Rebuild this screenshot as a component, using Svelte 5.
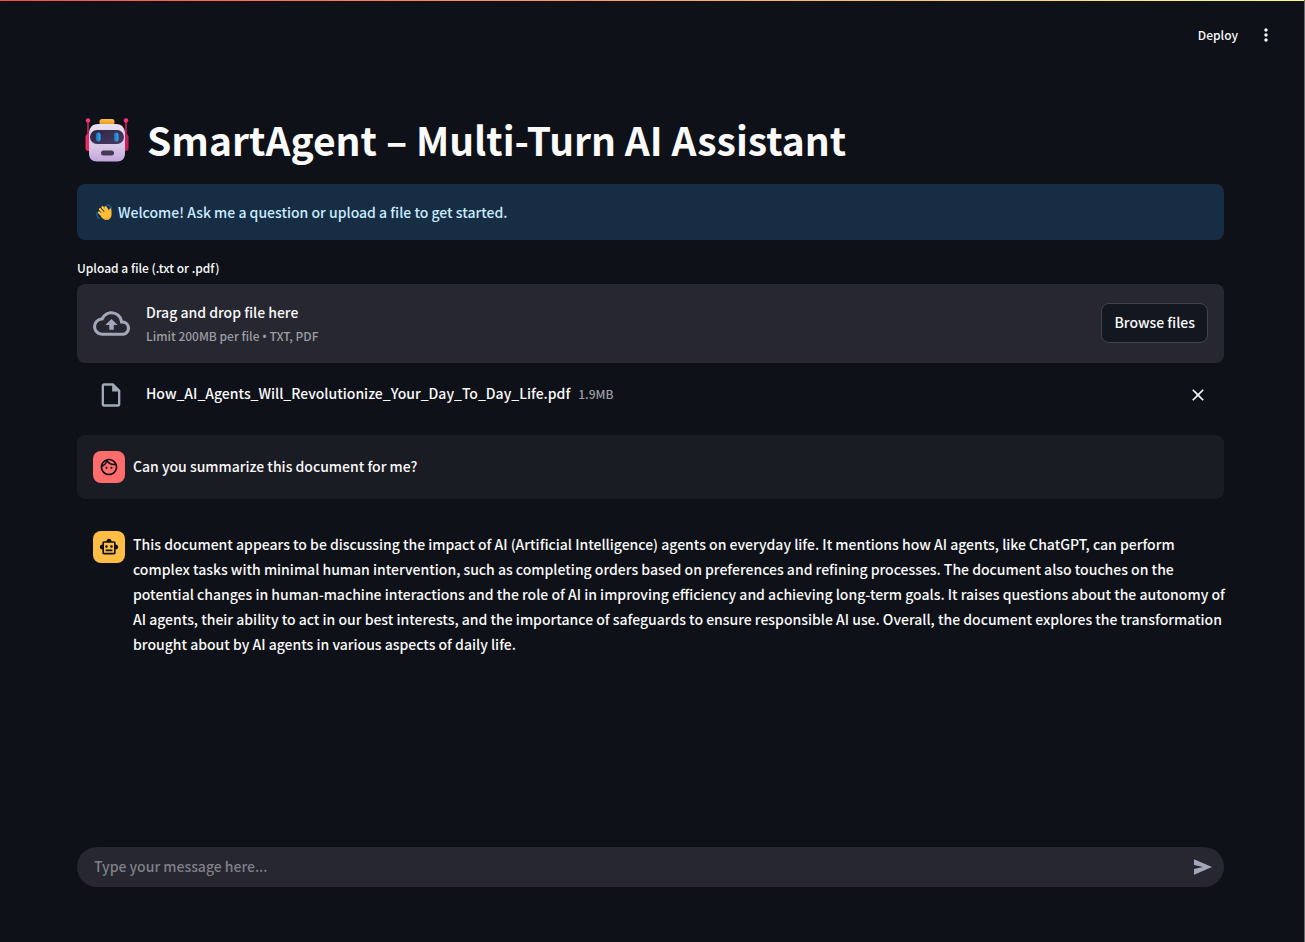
<script lang="ts">
  let message = $state('');
  let attached = $state(true);
</script>

<svelte:head><title>SmartAgent</title></svelte:head>

<div class="app">
  <div class="decoration"></div>
  <header>
    <button class="plain deploy" type="button">Deploy</button>
    <button class="plain" type="button" aria-label="Main menu">
      <svg width="20" height="20" viewBox="0 0 24 24" fill="currentColor"><path d="M12 8c1.1 0 2-.9 2-2s-.9-2-2-2-2 .9-2 2 .9 2 2 2zm0 2c-1.1 0-2 .9-2 2s.9 2 2 2 2-.9 2-2-.9-2-2-2zm0 6c-1.1 0-2 .9-2 2s.9 2 2 2 2-.9 2-2-.9-2-2-2z" /></svg>
    </button>
  </header>

  <main>
    <h1>
      <svg class="robot" width="46" height="46" viewBox="0 0 46 46" aria-hidden="true">
        <defs>
          <linearGradient id="head" x1="0" y1="0" x2="0" y2="1">
            <stop offset="0" stop-color="#e9e0f0" /><stop offset=".6" stop-color="#d8c8e6" /><stop offset="1" stop-color="#c3a5dc" />
          </linearGradient>
          <linearGradient id="visor" x1="0" y1="0" x2="1" y2="1">
            <stop offset="0" stop-color="#2d2540" /><stop offset="1" stop-color="#4b3b66" />
          </linearGradient>
          <linearGradient id="cap" x1="0" y1="0" x2="0" y2="1">
            <stop offset="0" stop-color="#ffc43c" /><stop offset="1" stop-color="#e58f2c" />
          </linearGradient>
          <linearGradient id="eye" x1="0" y1="0" x2="1" y2="0">
            <stop offset="0" stop-color="#1670b8" /><stop offset="1" stop-color="#35aef2" />
          </linearGradient>
        </defs>
        <path d="M4 5v21M42 5v21" stroke="#d81e5b" stroke-width="1.6" />
        <circle cx="4" cy="4.5" r="2.3" fill="#f4386c" /><circle cx="42" cy="4.5" r="2.3" fill="#f4386c" />
        <rect x="1.5" y="18" width="6" height="17" rx="3" fill="#ef2b62" />
        <rect x="38.5" y="18" width="6" height="17" rx="3" fill="#c81f58" />
        <rect x="15.5" y="3" width="15" height="6" rx="2.5" fill="url(#cap)" />
        <path d="M14 8h18c6 0 9 4 9 10v19.500c0 5-3 8-8 8H13c-5 0-8-3-8-8V18C5 12 8 8 14 8z" fill="url(#head)" />
        <rect x="6" y="14" width="34" height="14" rx="7" fill="url(#visor)" />
        <rect x="12" y="16.5" width="4.5" height="9" rx="2.2" fill="url(#eye)" />
        <rect x="30" y="16.5" width="4.5" height="9" rx="2.2" fill="url(#eye)" />
        <rect x="17" y="34.5" width="13" height="5" rx="2.5" fill="#453756" />
      </svg>
      <span>SmartAgent – Multi-Turn AI Assistant</span>
    </h1>

    <div class="info" role="status">
      <svg width="17" height="17" viewBox="0 0 17 17" aria-hidden="true">
        <path d="M1 8.5c-.5 3 .5 5 2.500 6M11 1c2 0 4 1.500 4.500 3.500" fill="none" stroke="#20608f" stroke-width="1.3" stroke-linecap="round" />
        <path d="M4 5.200 8 10M6.500 3.200 10.500 8M9.500 3.200l3.200 5M3 8.500l4 4" stroke="#ffc83d" stroke-width="2.2" stroke-linecap="round" />
        <path d="M5 9.500 11.500 6l1.500 1.500c.3-1.500.1-3 1.200-3.200 1.300 0 1.500 3 1.400 5.700-.1 3.500-2 6-5 6-2.300 0-4-1.500-5.600-3.500z" fill="#ffbd35" />
        <path d="M7.500 13.500c2 2 5.500 1.500 7-1.500-.5 2.500-2 4-4 4-1.500 0-2.500-1-3-2.500z" fill="#f09a32" />
        <path d="m5.300 5.200 2.700 3M8 4l2.300 3" stroke="#d88820" stroke-width=".5" />
      </svg>
      <span>Welcome! Ask me a question or upload a file to get started.</span>
    </div>

    <section class="uploader">
      <label class="small" for="file">Upload a file (.txt or .pdf)</label>
      <input id="file" type="file" accept=".txt,.pdf" hidden />
      <div class="dropzone">
        <svg class="lead" width="37" height="37" viewBox="0 0 24 24" fill="currentColor" aria-hidden="true"><path d="M19.350 10.040A7.490 7.490 0 0 0 12 4C9.110 4 6.600 5.640 5.350 8.040A5.994 5.994 0 0 0 0 14c0 3.310 2.690 6 6 6h13c2.760 0 5-2.240 5-5 0-2.640-2.050-4.780-4.650-4.960zM19 18H6c-2.210 0-4-1.790-4-4 0-2.050 1.530-3.760 3.560-3.970l1.070-.11.5-.95A5.469 5.469 0 0 1 12 6c2.620 0 4.880 1.860 5.390 4.430l.3 1.500 1.530.11A2.980 2.980 0 0 1 22 15c0 1.650-1.350 3-3 3zM8 13h2.550v3h2.900v-3H16l-4-4z" /></svg>
        <div class="hint">
          <span>Drag and drop file here</span>
          <span class="small muted">Limit 200MB per file <span class="bullet">•</span> TXT, PDF</span>
        </div>
        <button class="browse" type="button">Browse files</button>
      </div>
      {#if attached}
        <div class="file">
          <svg class="lead" width="28" height="28" viewBox="0 0 24 24" fill="currentColor" aria-hidden="true"><path d="M6 2c-1.100 0-1.990.9-1.990 2L4 20c0 1.100.890 2 1.990 2H18c1.100 0 2-.9 2-2V8l-6-6H6zm0 2h7v5h5v11H6V4z" /></svg>
          <div class="details">
            <span>How_AI_Agents_Will_Revolutionize_Your_Day_To_Day_Life.pdf</span>
            <span class="small muted">1.9MB</span>
          </div>
          <button class="plain" type="button" aria-label="Remove file" onclick={() => (attached = false)}>
            <svg width="20" height="20" viewBox="0 0 24 24" fill="currentColor"><path d="M19 6.410 17.590 5 12 10.590 6.410 5 5 6.410 10.590 12 5 17.590 6.410 19 12 13.410 17.590 19 19 17.590 13.410 12z" /></svg>
          </button>
        </div>
      {/if}
    </section>

    <article class="message user">
      <div class="avatar red">
        <svg width="20" height="20" viewBox="0 0 24 24" fill="currentColor" aria-hidden="true"><path d="M10.250 13c0 .69-.56 1.250-1.250 1.250S7.750 13.690 7.750 13s.56-1.250 1.250-1.250 1.250.56 1.250 1.250zM15 11.750c-.69 0-1.250.56-1.250 1.250s.56 1.250 1.250 1.250 1.250-.56 1.250-1.250-.56-1.250-1.250-1.250zm7 .25c0 5.520-4.480 10-10 10S2 17.520 2 12 6.480 2 12 2s10 4.480 10 10zM10.660 4.120C12.060 6.440 14.600 8 17.500 8c.46 0 .91-.05 1.340-.12C17.440 5.560 14.900 4 12 4c-.46 0-.91.05-1.340.12zM4.420 9.470c1.710-.97 3.030-2.550 3.660-4.440C6.370 6 5.050 7.580 4.420 9.470zM20 12c0-.78-.12-1.530-.33-2.240-.7.15-1.420.24-2.170.24-3.130 0-5.920-1.440-7.760-3.690C8.690 8.870 6.600 10.880 4 11.860c.01.04 0 .09 0 .14 0 4.410 3.590 8 8 8s8-3.590 8-8z" /></svg>
      </div>
      <p>Can you summarize this document for me?</p>
    </article>

    <article class="message">
      <div class="avatar amber">
        <svg width="20" height="20" viewBox="0 0 24 24" fill="currentColor" aria-hidden="true"><path d="M20 9V7c0-1.100-.9-2-2-2h-3c0-1.660-1.340-3-3-3S9 3.340 9 5H6c-1.100 0-2 .9-2 2v2c-1.660 0-3 1.340-3 3s1.340 3 3 3v4c0 1.100.9 2 2 2h12c1.100 0 2-.9 2-2v-4c1.660 0 3-1.340 3-3s-1.340-3-3-3zm-2 10H6V7h12v12zm-9-6c-.83 0-1.500-.67-1.500-1.500S8.170 10 9 10s1.500.67 1.500 1.500S9.830 13 9 13zm7.500-1.500c0 .83-.67 1.500-1.500 1.500s-1.500-.67-1.500-1.500.67-1.500 1.500-1.500 1.500.67 1.500 1.500zM8 15h8v2H8v-2z" /></svg>
      </div>
      <p>This document appears to be discussing the impact of AI (Artificial Intelligence) agents on everyday life. It mentions how AI agents, like ChatGPT, can perform complex tasks with minimal human intervention, such as completing orders based on preferences and refining processes. The document also touches on the potential changes in human-machine interactions and the role of AI in improving efficiency and achieving long-term goals. It raises questions about the autonomy of AI agents, their ability to act in our best interests, and the importance of safeguards to ensure responsible AI use. Overall, the document explores the transformation brought about by AI agents in various aspects of daily life.</p>
    </article>
  </main>

  <form class="chat" onsubmit={(e) => e.preventDefault()}>
    <input type="text" aria-label="Message" placeholder="Type your message here..." bind:value={message} />
    <button class="plain send" type="submit" aria-label="Send message">
      <svg width="20" height="20" viewBox="0 0 20 20" fill="currentColor"><path d="M1 2.300 19 10 1 17.700V12l9-2-9-2z" /></svg>
    </button>
  </form>
</div>

<style>
  :global(body) {
    margin: 0;
    background: #0e1117;
  }
  .app {
    box-sizing: border-box;
    display: flex;
    flex-direction: column;
    min-height: 100vh;
    padding-bottom: 55px;
    border-right: 1px solid #6a6a6c;
    background: #0e1117;
    color: #fafafa;
    font: 500 14px/25px "Noto Sans CJK SC", sans-serif;
  }
  button,
  input {
    font: inherit;
    color: inherit;
  }
  svg {
    display: block;
    flex: none;
  }
  .decoration {
    height: 1px;
    background: linear-gradient(90deg, #ff4b4b, #fffd80);
  }
  header {
    display: flex;
    justify-content: flex-end;
    align-items: center;
    gap: 18px;
    height: 68px;
    padding-right: 28px;
  }
  .plain {
    display: flex;
    padding: 0;
    border: 0;
    background: none;
    cursor: pointer;
  }
  .deploy {
    font-size: 12px;
    line-height: 24px;
    padding-bottom: 1px;
  }
  main {
    flex: 1;
    padding: 44px 80px 0 77px;
  }
  h1 {
    display: flex;
    align-items: center;
    gap: 17px;
    margin: 0;
    padding: 0 0 19px 7px;
    font-size: 39px;
    line-height: 52px;
    font-weight: 700;
  }
  .info {
    display: flex;
    align-items: center;
    gap: 5px;
    padding: 16px 19px 15px;
    border-radius: 8px;
    background: #172d43;
    color: #c7ebff;
  }
  .uploader {
    padding-top: 15px;
  }
  .small {
    font-size: 12px;
  }
  .bullet {
    font-family: "Noto Sans", sans-serif;
    line-height: 1;
  }
  label {
    display: block;
    padding-bottom: 4px;
  }
  .muted {
    color: #9c9da3;
  }
  .lead {
    color: #a3a8b8;
  }
  .dropzone {
    display: flex;
    align-items: center;
    gap: 16px;
    padding: 14px 16px 15px;
    border-radius: 8px;
    background: #262730;
  }
  .hint {
    display: flex;
    flex: 1;
    flex-direction: column;
    padding-top: 2px;
    line-height: 24px;
  }
  .browse {
    padding: 6px 12px 7px;
    border: 1px solid #41444c;
    border-radius: 8px;
    background: #131720;
  }
  .file {
    display: flex;
    align-items: center;
    gap: 21px;
    padding: 18px 16px 26px 20px;
  }
  .details {
    display: flex;
    flex: 1;
    gap: 8px;
    padding-bottom: 3px;
  }
  .message {
    display: flex;
    gap: 8px;
    padding: 16px 0 16px 16px;
    border-radius: 8px;
  }
  .user {
    margin-bottom: 16px;
    background: #1a1c24;
  }
  .message p {
    margin: 0 -4px 0 0;
    padding-top: 1px;
  }
  .user p {
    padding-top: 3px;
  }
  .avatar {
    display: grid;
    place-items: center;
    flex: none;
    width: 32px;
    height: 32px;
    border-radius: 8px;
    color: #0e1117;
  }
  .red {
    background: #ff6c6c;
  }
  .amber {
    background: #ffbd45;
  }
  .chat {
    display: flex;
    align-items: center;
    margin: 0 80px 0 77px;
    height: 40px;
    padding: 0 11px 0 17px;
    border-radius: 20px;
    background: #262730;
  }
  .chat input {
    flex: 1;
    min-width: 0;
    padding: 0 0 2px;
    border: 0;
    outline: 0;
    background: none;
  }
  .chat input::placeholder {
    color: #7f8087;
    opacity: 1;
  }
  .send {
    color: #a3a8b8;
  }
</style>
